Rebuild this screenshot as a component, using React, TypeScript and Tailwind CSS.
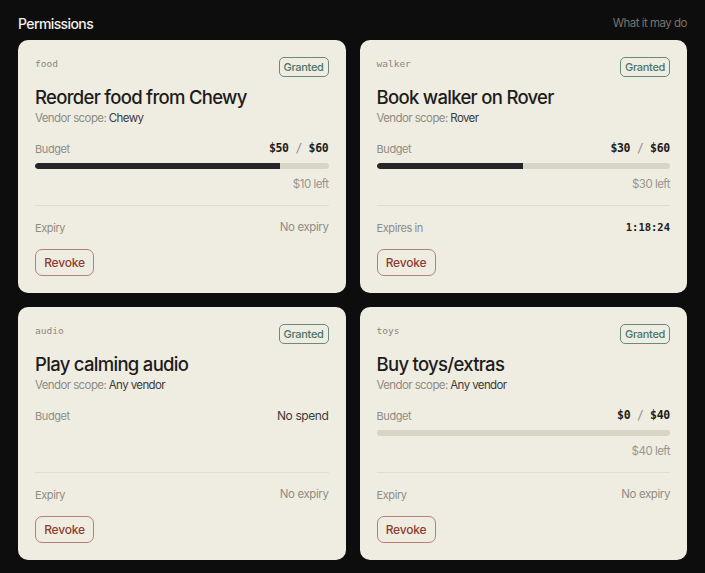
import React from "react";

type TPermission = {
  key: string;
  title: string;
  vendor: string;
  spent?: number;
  limit?: number;
  expiresIn?: string;
};

const permissions: TPermission[] = [
  { key: "food", title: "Reorder food from Chewy", vendor: "Chewy", spent: 50, limit: 60 },
  { key: "walker", title: "Book walker on Rover", vendor: "Rover", spent: 30, limit: 60, expiresIn: "1:18:24" },
  { key: "audio", title: "Play calming audio", vendor: "Any vendor" },
  { key: "toys", title: "Buy toys/extras", vendor: "Any vendor", spent: 0, limit: 40 },
];

const sans = "font-['Inter','Noto_Sans',sans-serif]";
const mono = "font-['DejaVu_Sans_Mono','Liberation_Mono',monospace]";

const PermissionCard = ({ p }: { p: TPermission }) => {
  const hasBudget = p.limit !== undefined;
  const pct = hasBudget ? ((p.spent ?? 0) / (p.limit ?? 1)) * 100 : 0;

  return (
    <div className="flex h-[253px] flex-col rounded-[10px] bg-[#efece2] p-[17px]">
      <div className="flex-1">
        <div className="flex h-[20px] items-start justify-between">
          <span className={`${mono} mt-[1px] text-[9.5px] leading-[12px] text-[#8a877f]`}>{p.key}</span>
          <span className="flex h-[20px] w-[50px] items-center justify-center rounded-[5px] border border-[#6a8a7e] text-[11px] font-medium tracking-[-0.3px] text-[#4b7566]">
            Granted
          </span>
        </div>
        <h2 className="mt-[8px] text-[18.5px] font-medium leading-[24px] tracking-[-0.7px] text-[#1d1c1a]">
          {p.title}
        </h2>
        <div className="mt-[1px] text-[11.5px] leading-[16px] tracking-[-0.6px] text-[#8f8c85]">
          Vendor scope: <span className="text-[#3d3b37]">{p.vendor}</span>
        </div>
        <div className="mt-[14px] flex h-[18px] items-center justify-between">
          <span className="text-[11px] tracking-[-0.4px] text-[#8f8c85]">Budget</span>
          {hasBudget ? (
            <span className={`${mono} text-[11.5px] font-bold tracking-[-0.3px] text-[#1d1c1a]`}>
              ${p.spent} <span className="font-normal text-[#8f8c85]">/</span> ${p.limit}
            </span>
          ) : (
            <span className="text-[12px] tracking-[-0.4px] text-[#3d3b37]">No spend</span>
          )}
        </div>
        {hasBudget && (
          <>
            <div className="mt-[5px] h-[6px] w-full overflow-hidden rounded-full bg-[#d9d5c6]">
              <div className="h-full rounded-l-full bg-[#25252a]" style={{ width: `${pct}%` }} />
            </div>
            <div className="mt-[7px] text-right text-[11.5px] leading-[16px] tracking-[-0.5px] text-[#9a978f]">
              ${(p.limit ?? 0) - (p.spent ?? 0)} left
            </div>
          </>
        )}
      </div>
      <div className="border-t border-[#e0dccf] pt-[13px]">
        <div className="flex h-[18px] items-center justify-between">
          <span className="text-[11px] tracking-[-0.4px] text-[#8f8c85]">{p.expiresIn ? "Expires in" : "Expiry"}</span>
          {p.expiresIn ? (
            <span className={`${mono} text-[10.5px] font-bold text-[#1d1c1a]`}>{p.expiresIn}</span>
          ) : (
            <span className="text-[11.5px] tracking-[-0.4px] text-[#8f8c85]">No expiry</span>
          )}
        </div>
        <button className="mt-[12px] flex h-[27px] w-[59px] items-center justify-center rounded-[7px] border border-[#b5817a] text-[12px] font-medium tracking-[-0.2px] text-[#8e3d30]">
          Revoke
        </button>
      </div>
    </div>
  );
};

export default function App() {
  return (
    <div className={`${sans} min-h-screen bg-[#0e0d0d] px-[18px] pt-[14px] pb-[12px]`}>
      <div className="flex h-[18px] items-center justify-between">
        <span className="text-[14px] font-medium tracking-[-0.6px] text-[#f2f0ea]">Permissions</span>
        <span className="mt-[1px] text-[11.5px] tracking-[-0.5px] text-[#77736c]">What it may do</span>
      </div>
      <div className="mt-[8px] grid grid-cols-2 gap-[14px]">
        {permissions.map((p) => (
          <PermissionCard key={p.key} p={p} />
        ))}
      </div>
    </div>
  );
}
